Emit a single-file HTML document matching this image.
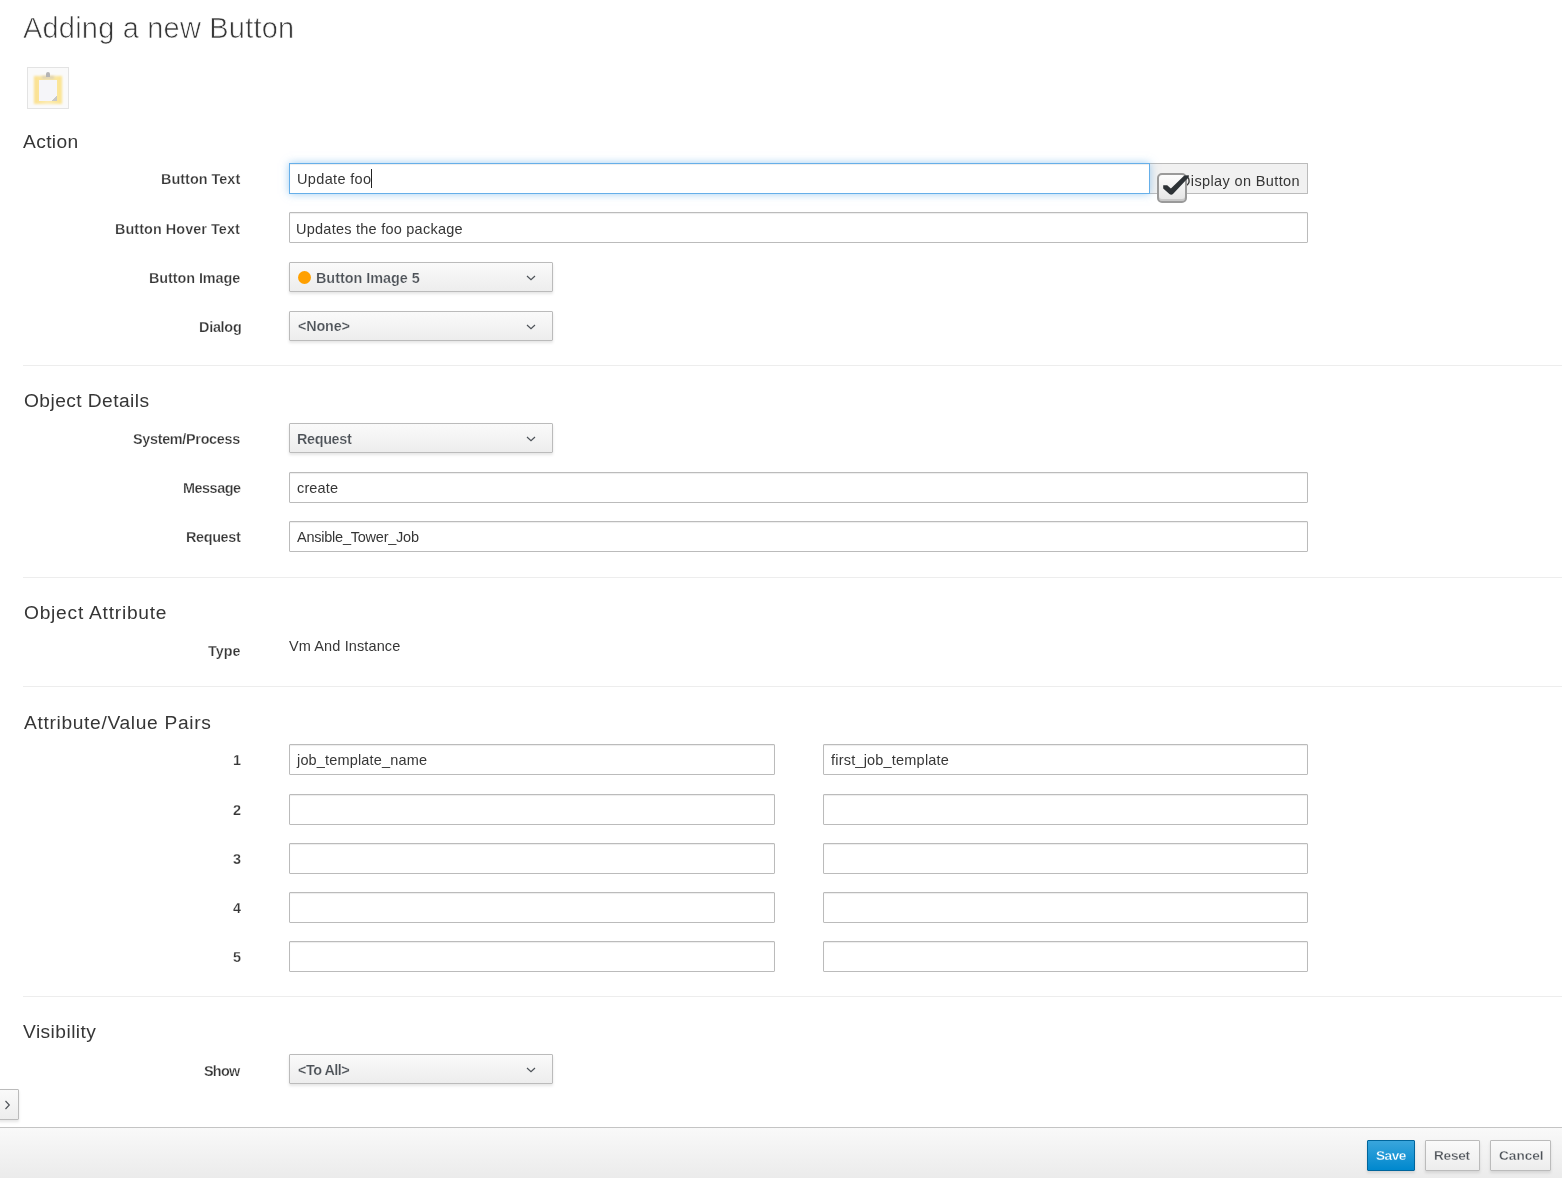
<!DOCTYPE html>
<html><head><meta charset="utf-8"><title>Adding a new Button</title>
<style>
html,body{margin:0;padding:0;width:1562px;height:1178px;overflow:hidden;background:#fff;}
body{position:relative;font-family:"Liberation Sans",sans-serif;color:#363636;}
div,svg{position:absolute;}
.t{white-space:nowrap;will-change:transform;}
.sep{left:23px;right:0;height:1px;background:#ededed;}
.inp{box-sizing:border-box;border:1px solid #bbb;border-radius:1px;background:#fff;box-shadow:inset 0 1px 1px rgba(3,3,3,.075);}
.sel{box-sizing:border-box;border:1px solid #bbb;border-radius:1px;background:linear-gradient(#fafafa,#ededed);box-shadow:0 2px 3px rgba(3,3,3,.1);}
.dot{width:13px;height:13px;border-radius:50%;background:#ffa000;}
</style></head><body>
<div style="left:27px;top:67px;width:42px;height:42px;box-sizing:border-box;border:1px solid #e3e3e3;background:#fafafa;"></div>
<div style="left:34px;top:76px;width:28px;height:28px;background:linear-gradient(90deg,#fbe08e,#fcebb0 50%,#fbe38f);filter:blur(0.9px);"></div>
<div style="left:42px;top:76px;width:12px;height:3px;background:#ddd2b4;filter:blur(0.8px);"></div>
<div style="left:39px;top:80px;width:18px;height:21px;background:#f5f5f9;filter:blur(0.7px);"></div>
<div style="left:52px;top:96px;width:5px;height:5px;background:linear-gradient(135deg,#f5f5f9 50%,#c8c8c8 50%);filter:blur(0.5px);"></div>
<div style="left:46px;top:72px;width:4px;height:5px;background:#b4b4b4;border-radius:2px 2px 0 0;filter:blur(0.7px);"></div>
<div style="left:1150px;top:163px;width:158px;height:31px;box-sizing:border-box;border:1px solid #bbb;border-left:0;border-radius:0 1px 1px 0;background:#f1f1f1;"></div>
<div style="left:289px;top:163px;width:861px;height:31px;box-sizing:border-box;border:1px solid #66afe9;background:#fff;box-shadow:inset 0 1px 1px rgba(0,0,0,.075),0 0 8px rgba(102,175,233,.6);"></div>
<div class="inp" style="left:289px;top:212px;width:1019px;height:31px"></div>
<div class="sel" style="left:289px;top:262px;width:264px;height:30px"></div>
<div class="dot" style="left:298px;top:271px"></div>
<svg style="left:526px;top:275px" width="10" height="6" viewBox="0 0 10 6"><path d="M1 1 L5 4.6 L9 1" fill="none" stroke="#4d5258" stroke-width="1.2"/></svg>
<div class="sel" style="left:289px;top:311px;width:264px;height:30px"></div>
<svg style="left:526px;top:324px" width="10" height="6" viewBox="0 0 10 6"><path d="M1 1 L5 4.6 L9 1" fill="none" stroke="#4d5258" stroke-width="1.2"/></svg>
<div class="sep" style="top:365px"></div>
<div class="sel" style="left:289px;top:423px;width:264px;height:30px"></div>
<svg style="left:526px;top:436px" width="10" height="6" viewBox="0 0 10 6"><path d="M1 1 L5 4.6 L9 1" fill="none" stroke="#4d5258" stroke-width="1.2"/></svg>
<div class="inp" style="left:289px;top:472px;width:1019px;height:31px"></div>
<div class="inp" style="left:289px;top:521px;width:1019px;height:31px"></div>
<div class="sep" style="top:577px"></div>
<div class="sep" style="top:686px"></div>
<div class="inp" style="left:289px;top:744px;width:486px;height:31px"></div>
<div class="inp" style="left:823px;top:744px;width:485px;height:31px"></div>
<div class="inp" style="left:289px;top:794px;width:486px;height:31px"></div>
<div class="inp" style="left:823px;top:794px;width:485px;height:31px"></div>
<div class="inp" style="left:289px;top:843px;width:486px;height:31px"></div>
<div class="inp" style="left:823px;top:843px;width:485px;height:31px"></div>
<div class="inp" style="left:289px;top:892px;width:486px;height:31px"></div>
<div class="inp" style="left:823px;top:892px;width:485px;height:31px"></div>
<div class="inp" style="left:289px;top:941px;width:486px;height:31px"></div>
<div class="inp" style="left:823px;top:941px;width:485px;height:31px"></div>
<div class="sep" style="top:996px"></div>
<div class="sel" style="left:289px;top:1054px;width:264px;height:30px"></div>
<svg style="left:526px;top:1067px" width="10" height="6" viewBox="0 0 10 6"><path d="M1 1 L5 4.6 L9 1" fill="none" stroke="#4d5258" stroke-width="1.2"/></svg>
<div style="left:-2px;top:1089px;width:21px;height:31px;box-sizing:border-box;border:1px solid #bbb;border-radius:1px;background:linear-gradient(#fafafa,#ededed);box-shadow:0 2px 3px rgba(3,3,3,.1);"></div>
<svg style="left:4px;top:1100px" width="7" height="10" viewBox="0 0 7 10"><path d="M1.5 1 L5.3 5 L1.5 9" fill="none" stroke="#4d5258" stroke-width="1.15"/></svg>
<div style="left:0;top:1127px;width:1562px;height:51px;box-sizing:border-box;border-top:1px solid #c4c4c4;background:linear-gradient(#f9f9f9,#ebebeb);"></div>
<div style="left:1367px;top:1140px;width:48px;height:31px;box-sizing:border-box;border:1px solid #00659c;border-radius:1px;background:linear-gradient(#39a5dc,#0088ce);box-shadow:0 2px 3px rgba(3,3,3,.1);"></div>
<div style="left:1425px;top:1140px;width:55px;height:31px;box-sizing:border-box;border:1px solid #bbb;border-radius:1px;background:linear-gradient(#fafafa,#ededed);box-shadow:0 2px 3px rgba(3,3,3,.1);"></div>
<div style="left:1490px;top:1140px;width:61px;height:31px;box-sizing:border-box;border:1px solid #bbb;border-radius:1px;background:linear-gradient(#fafafa,#ededed);box-shadow:0 2px 3px rgba(3,3,3,.1);"></div>
<div class="t" style="left:23.00px;top:14.05px;font-size:29px;line-height:29px;letter-spacing:0.194px;-webkit-text-stroke:0.7px #fff;">Adding a new Button</div>
<div class="t" style="left:23.00px;top:131.75px;font-size:19.2px;line-height:19.2px;letter-spacing:0.369px;">Action</div>
<div class="t" style="left:23.80px;top:391.45px;font-size:19.2px;line-height:19.2px;letter-spacing:0.435px;">Object Details</div>
<div class="t" style="left:23.80px;top:602.65px;font-size:19.2px;line-height:19.2px;letter-spacing:0.755px;">Object Attribute</div>
<div class="t" style="left:23.50px;top:712.65px;font-size:19.2px;line-height:19.2px;letter-spacing:0.666px;">Attribute/Value Pairs</div>
<div class="t" style="left:23.00px;top:1022.45px;font-size:19.2px;line-height:19.2px;letter-spacing:0.438px;">Visibility</div>
<div class="t" style="left:160.90px;top:171.81px;font-size:14.4px;line-height:14.4px;font-weight:bold;letter-spacing:0.033px;-webkit-text-stroke:0.25px #fff;">Button Text</div>
<div class="t" style="left:115.00px;top:221.81px;font-size:14.4px;line-height:14.4px;font-weight:bold;letter-spacing:0.071px;-webkit-text-stroke:0.25px #fff;">Button Hover Text</div>
<div class="t" style="left:149.00px;top:270.81px;font-size:14.4px;line-height:14.4px;font-weight:bold;letter-spacing:-0.067px;-webkit-text-stroke:0.25px #fff;">Button Image</div>
<div class="t" style="left:198.60px;top:319.81px;font-size:14.4px;line-height:14.4px;font-weight:bold;letter-spacing:-0.257px;-webkit-text-stroke:0.25px #fff;">Dialog</div>
<div class="t" style="left:133.30px;top:432.31px;font-size:14.4px;line-height:14.4px;font-weight:bold;letter-spacing:-0.307px;-webkit-text-stroke:0.25px #fff;">System/Process</div>
<div class="t" style="left:182.50px;top:481.01px;font-size:14.4px;line-height:14.4px;font-weight:bold;letter-spacing:-0.465px;-webkit-text-stroke:0.25px #fff;">Message</div>
<div class="t" style="left:185.60px;top:530.01px;font-size:14.4px;line-height:14.4px;font-weight:bold;letter-spacing:-0.347px;-webkit-text-stroke:0.25px #fff;">Request</div>
<div class="t" style="left:208.00px;top:643.51px;font-size:14.4px;line-height:14.4px;font-weight:bold;letter-spacing:-0.038px;-webkit-text-stroke:0.25px #fff;">Type</div>
<div class="t" style="left:232.60px;top:752.81px;font-size:14.4px;line-height:14.4px;font-weight:bold;-webkit-text-stroke:0.25px #fff;">1</div>
<div class="t" style="left:232.60px;top:802.81px;font-size:14.4px;line-height:14.4px;font-weight:bold;-webkit-text-stroke:0.25px #fff;">2</div>
<div class="t" style="left:232.60px;top:851.81px;font-size:14.4px;line-height:14.4px;font-weight:bold;-webkit-text-stroke:0.25px #fff;">3</div>
<div class="t" style="left:232.60px;top:900.81px;font-size:14.4px;line-height:14.4px;font-weight:bold;-webkit-text-stroke:0.25px #fff;">4</div>
<div class="t" style="left:232.60px;top:949.81px;font-size:14.4px;line-height:14.4px;font-weight:bold;-webkit-text-stroke:0.25px #fff;">5</div>
<div class="t" style="left:204.10px;top:1063.61px;font-size:14.4px;line-height:14.4px;font-weight:bold;letter-spacing:-0.726px;-webkit-text-stroke:0.25px #fff;">Show</div>
<div class="t" style="left:297.00px;top:171.73px;font-size:14.5px;line-height:14.5px;letter-spacing:0.347px;">Update foo</div>
<div class="t" style="left:1179.50px;top:173.73px;font-size:14.5px;line-height:14.5px;letter-spacing:0.370px;">Display on Button</div>
<div class="t" style="left:296.00px;top:221.73px;font-size:14.5px;line-height:14.5px;letter-spacing:0.243px;">Updates the foo package</div>
<div class="t" style="left:297.30px;top:480.93px;font-size:14.5px;line-height:14.5px;letter-spacing:0.133px;">create</div>
<div class="t" style="left:297.30px;top:529.93px;font-size:14.5px;line-height:14.5px;letter-spacing:-0.236px;">Ansible_Tower_Job</div>
<div class="t" style="left:289.00px;top:639.43px;font-size:14.5px;line-height:14.5px;letter-spacing:0.117px;">Vm And Instance</div>
<div class="t" style="left:297.40px;top:752.73px;font-size:14.5px;line-height:14.5px;letter-spacing:0.163px;">job_template_name</div>
<div class="t" style="left:831.40px;top:752.73px;font-size:14.5px;line-height:14.5px;letter-spacing:0.201px;">first_job_template</div>
<div class="t" style="left:315.70px;top:270.81px;font-size:14.4px;line-height:14.4px;font-weight:bold;letter-spacing:-0.018px;color:#4d5258;-webkit-text-stroke:0.2px #f3f3f3;">Button Image 5</div>
<div class="t" style="left:297.70px;top:318.81px;font-size:14.4px;line-height:14.4px;font-weight:bold;letter-spacing:-0.176px;color:#4d5258;-webkit-text-stroke:0.2px #f3f3f3;">&lt;None&gt;</div>
<div class="t" style="left:297.30px;top:432.31px;font-size:14.4px;line-height:14.4px;font-weight:bold;letter-spacing:-0.347px;color:#4d5258;-webkit-text-stroke:0.2px #f3f3f3;">Request</div>
<div class="t" style="left:297.50px;top:1062.81px;font-size:14.4px;line-height:14.4px;font-weight:bold;letter-spacing:-0.486px;color:#4d5258;-webkit-text-stroke:0.2px #f3f3f3;">&lt;To All&gt;</div>
<div class="t" style="left:1375.60px;top:1149.19px;font-size:13.6px;line-height:13.6px;font-weight:bold;letter-spacing:-0.496px;color:#fff;-webkit-text-stroke:0.3px #1e96d6;">Save</div>
<div class="t" style="left:1433.80px;top:1149.19px;font-size:13.6px;line-height:13.6px;font-weight:bold;letter-spacing:-0.249px;color:#4d5258;-webkit-text-stroke:0.3px #f3f3f3;">Reset</div>
<div class="t" style="left:1498.50px;top:1149.19px;font-size:13.6px;line-height:13.6px;font-weight:bold;color:#4d5258;-webkit-text-stroke:0.3px #f3f3f3;">Cancel</div>
<div style="left:371px;top:169px;width:1px;height:19px;background:#222"></div>
<div style="left:1157px;top:173px;width:30px;height:30px;box-sizing:border-box;border:2px solid #9a9a9a;border-radius:5px;background:linear-gradient(#fdfdfd,#e4e4e4);box-shadow:inset 0 -2px 0 #c8c8c8;"></div>
<svg style="left:0;top:0" width="1562" height="1178" viewBox="0 0 1562 1178"><path d="M1163.2 185.2 L1167.2 185.2 L1170.9 188.6 L1184.3 175.5 L1188.9 175.3 L1188.7 177.2 L1173 194.1 Q1171.2 195.6 1169.4 194.1 L1163.2 188.6 Z" fill="#2d3236"/></svg>
</body></html>
